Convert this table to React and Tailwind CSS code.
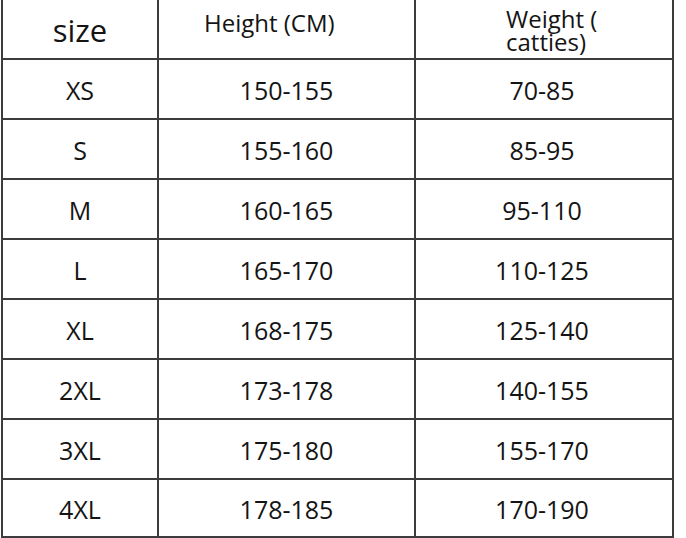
const rows = [
  ['XS', '150-155', '70-85'],
  ['S', '155-160', '85-95'],
  ['M', '160-165', '95-110'],
  ['L', '165-170', '110-125'],
  ['XL', '168-175', '125-140'],
  ['2XL', '173-178', '140-155'],
  ['3XL', '175-180', '155-170'],
  ['4XL', '178-185', '170-190'],
];

export default function App() {
  return (
    <div className="w-[686px] h-[538px] bg-white overflow-hidden text-[#141414]" style={{ fontFamily: '"Open Sans", "Noto Sans", sans-serif' }}>
      <div className="ml-[1px] w-[673px] border-l-2 border-r-2 border-[#3c3c3c]">
        <div className="grid grid-cols-[156px_257px_256px] h-[60px] border-b-2 border-[#3c3c3c]">
          <div className="border-r-2 border-[#3c3c3c] flex justify-center pt-[15px]">
            <span className="text-[31px] leading-none">size</span>
          </div>
          <div className="border-r-2 border-[#3c3c3c] flex pl-[45px] pt-[11px]">
            <span className="text-[24px] leading-none">Height (CM)</span>
          </div>
          <div className="flex flex-col pl-[90px] pt-[7px] text-[24px] leading-[23px]">
            <span>Weight (</span>
            <span>catties)</span>
          </div>
        </div>
        {rows.map((r, i) => (
          <div
            key={r[0]}
            className={`grid grid-cols-[156px_257px_256px] border-b-2 border-[#3c3c3c] text-[25px] ${i === rows.length - 1 ? 'h-[58px]' : 'h-[60px]'}`}
          >
            <div className="border-r-2 border-[#3c3c3c] flex items-center justify-center pt-[4px]">{r[0]}</div>
            <div className="border-r-2 border-[#3c3c3c] flex items-center justify-center pt-[4px]">{r[1]}</div>
            <div className="flex items-center justify-center pt-[4px] pr-[4px]">{r[2]}</div>
          </div>
        ))}
      </div>
    </div>
  );
}
